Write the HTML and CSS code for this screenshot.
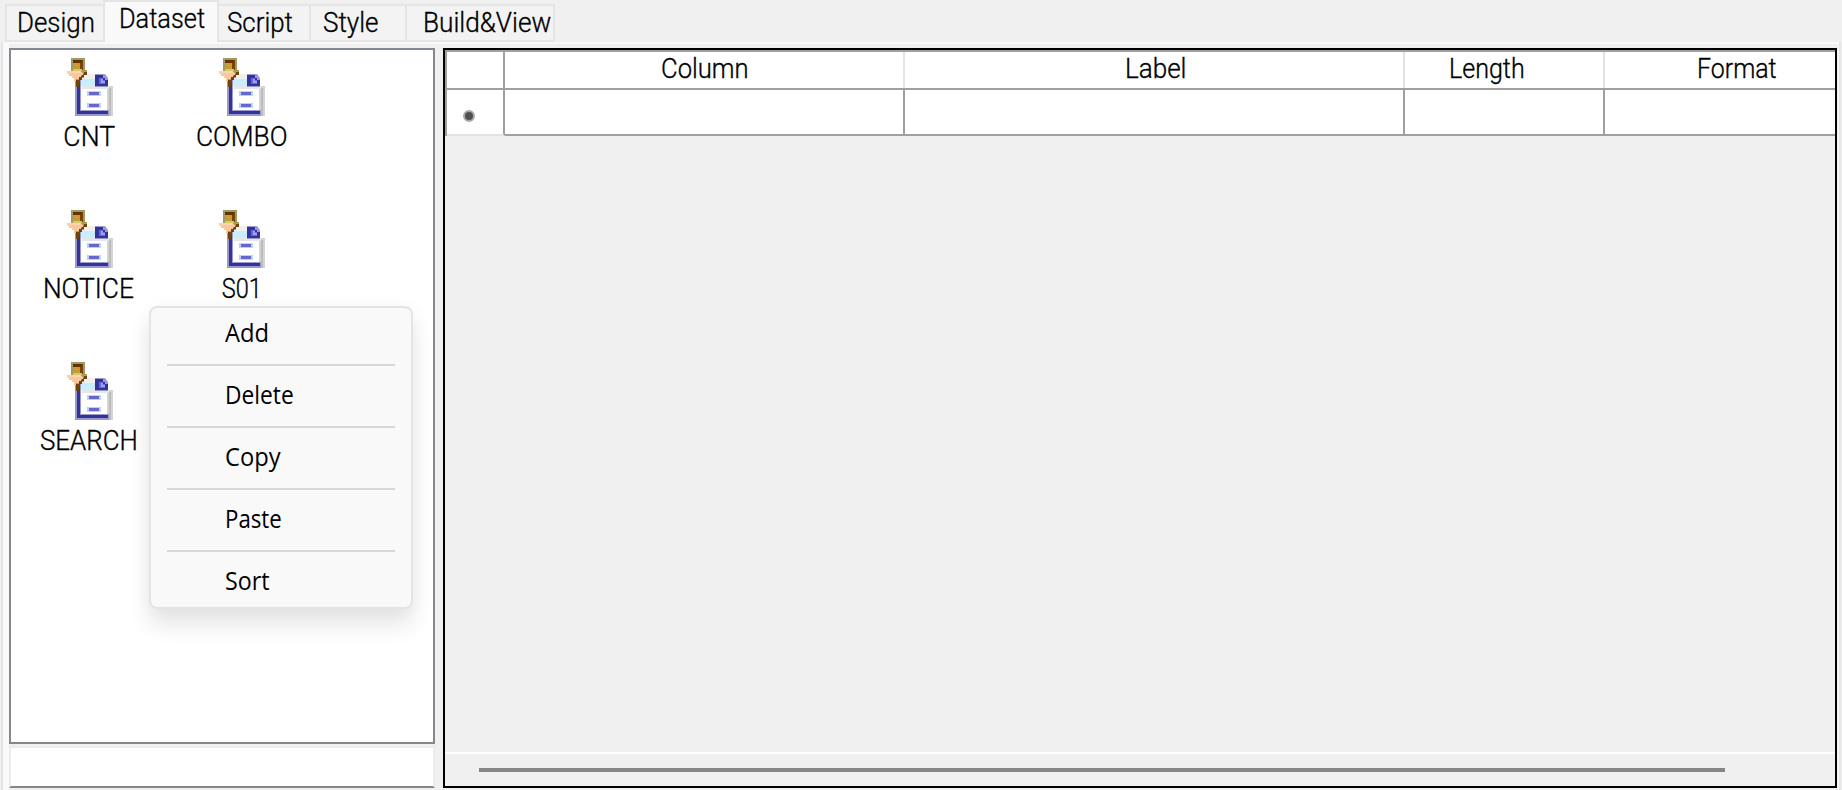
FILE: index.html
```html
<!DOCTYPE html>
<html lang="en">
<head>
<meta charset="utf-8">
<title>Dataset</title>
<link rel="stylesheet" href="styles.css">
</head>
<body>
<svg width="0" height="0" class="defs">
  <symbol id="dataset-icon" viewBox="0 0 46 58">
    <path fill="#d4d4d4" d="M38 28h8v30h-6z"/>
    <path fill="#bcbcbc" d="M42 30h2v28h-2z"/>
    <path fill="#9999cc" d="M8 22h6v30h28v6H8z"/>
    <path fill="#33339a" d="M10 21h3v32h28v3H10z"/>
    <path fill="#fff" d="M15 17h13v11h12v24H15z"/>
    <path fill="#f0f0f0" d="M16 16h12v5H15z"/>
    <path fill="#c9edff" d="M14 21h14v7H14z"/>
    <path fill="#e6e6e6" d="M15 28h27v3H15z"/>
    <path fill="#9999cc" d="M28 16h10l3 4v9H28z"/>
    <path fill="#33339a" d="M28 17h8v3h2v2h3v6H28z"/>
    <path fill="#6666d8" d="M32 20h4v2h2v4h-6z"/>
    <path fill="#9f9fff" d="M34 21h2v2h2v2h-4z"/>
    <path fill="#b4d6fb" d="M20 33h14v5H20zM20 45h14v5H20z"/>
    <path fill="#6666cc" d="M22 34h10v3H22zM22 46h10v3H22z"/>
    <path fill="#9b9b66" d="M4 0h14v14H4z"/>
    <path fill="#7c4200" d="M6 2h10v10H6z"/>
    <path fill="#663300" d="M6 2h9v3H6z"/>
    <path fill="#cc9933" d="M6 5h7v8H6z"/>
    <path fill="#cccc66" d="M6 11h9v2H6z"/>
    <path fill="#b59a55" d="M16 12h4v4h-3v4h-4v3H8v-4h4z"/>
    <path fill="#6b4410" d="M17 14h3v3h-3v2h-2v3h-2v3h-1v4h-3v-7h3v-4h3v-2h2z"/>
    <path fill="#ffd3b0" d="M0 13h14v3H0z"/>
    <path fill="#ffc799" d="M2 15h14v2h-2v2h-2v2H9v2H7v-3H5v-2H2z"/>
  </symbol>
</svg>
<div class="window">
  <nav class="tabs">
    <div class="tab design"><span>Design</span></div>
    <div class="tab dataset active"><span>Dataset</span></div>
    <div class="tab script"><span>Script</span></div>
    <div class="tab style"><span>Style</span></div>
    <div class="tab build"><span>Build&amp;View</span></div>
  </nav>
  <main class="page">
    <section class="side">
      <div class="list">
        <div class="item"><svg><use href="#dataset-icon"/></svg><span class="cnt">CNT</span></div>
        <div class="item"><svg><use href="#dataset-icon"/></svg><span class="combo">COMBO</span></div>
        <div class="item"><svg><use href="#dataset-icon"/></svg><span class="notice">NOTICE</span></div>
        <div class="item"><svg><use href="#dataset-icon"/></svg><span class="s01">S01</span></div>
        <div class="item"><svg><use href="#dataset-icon"/></svg><span class="search">SEARCH</span></div>
      </div>
      <div class="field"></div>
    </section>
    <section class="grid">
      <div class="row head">
        <div></div><div><span class="h-column">Column</span></div><div><span class="h-label">Label</span></div><div><span class="h-length">Length</span></div><div><span class="h-format">Format</span></div>
      </div>
      <div class="row entry">
        <div><i class="dot"></i></div><div></div><div></div><div></div><div></div>
      </div>
      <div class="scroll"><div class="thumb"></div></div>
    </section>
  </main>
  <div class="menu">
    <div><span class="m-add">Add</span></div>
    <div><span class="m-delete">Delete</span></div>
    <div><span class="m-copy">Copy</span></div>
    <div><span class="m-paste">Paste</span></div>
    <div><span class="m-sort">Sort</span></div>
  </div>
</div>
</body>
</html>
```
FILE: styles.css
```css
* { box-sizing: border-box; }
body { margin: 0; background: #f0f0f0; color: #000; font: 300 28px/32px Roboto, sans-serif; -webkit-text-stroke: .35px #000; overflow: hidden; }
.defs { position: absolute; }
.window { position: relative; width: 1842px; height: 790px; display: flex; flex-direction: column; }
span { display: inline-block; white-space: nowrap; transform-origin: 0 50%; }

.tabs { display: flex; align-items: flex-end; height: 42px; padding-left: 5px; flex: none; }
.tab { height: 38px; border: 2px solid #e5e5e5; border-left: 0; background: #f3f3f3; padding-top: 1px; }
.design { width: 98px; border-left: 2px solid #e5e5e5; padding-left: 10px; border-right: 0; }
.dataset { width: 116px; padding-left: 14px; }
.tab.active { height: 42px; background: #f9f9f9; border-left: 2px solid #e5e5e5; border-bottom: 0; }
.script { width: 92px; padding-left: 8px; }
.style { width: 96px; padding-left: 12px; }
.build { width: 148px; padding-left: 16px; }
.design span { transform: scaleX(.925); }
.dataset span { transform: scaleX(.905); }
.script span { transform: scaleX(.925); }
.style span { transform: scaleX(.93); }
.build span { transform: scaleX(.935); }

.page { flex: 1; margin: 0 1px 0 1px; border: 2px solid #e5e5e5; border-width: 0 2px; background: #f0f0f0; display: flex; gap: 8px; padding: 6px 2px 2px 6px; box-shadow: inset 6px 2px #f9f9f9, inset -1px 0 #f9f9f9; }
.side { width: 426px; display: flex; flex-direction: column; gap: 2px; }
.list { height: 696px; border: 2px solid #828790; background: #fff; display: grid; grid-template-columns: 152px 152px; grid-auto-rows: 152px; align-content: start; padding: 8px 0 0 3px; }
.item { display: flex; flex-direction: column; align-items: center; gap: 5px; }
.item svg { width: 46px; height: 58px; flex: none; }
.item span { transform-origin: 50% 50%; }
.cnt { transform: translateX(-1px) scaleX(.95); }
.combo { transform: scaleX(.94); }
.notice { transform: translateX(-2px) scaleX(.94); }
.s01 { transform: scaleX(.84); }
.search { transform: translateX(-1px) scaleX(.925); }
.field { flex: 1; border: 2px solid #ececec; border-bottom-color: #868686; background: #fff; }

.grid { flex: 1; border: 2px solid #000; display: flex; flex-direction: column; min-width: 0; overflow: hidden; }
.row { display: grid; grid-template-columns: 58px 400px 500px 200px 1fr; border-left: 2px solid #a0a0a0; background: #fff; flex: none; }
.head { height: 40px; border-top: 2px solid #a0a0a0; border-bottom: 2px solid #a0a0a0; }
.head div { border-right: 2px solid #e3e3e3; padding-top: 1px; }
.head div:first-child { border-color: #a0a0a0; }
.head div:last-child, .entry div:last-child { border-right: 0; }
.entry { height: 46px; }
.entry div { border-right: 2px solid #a0a0a0; border-bottom: 2px solid #a0a0a0; }
.entry div:first-child { border-bottom-color: #e3e3e3; }
.dot { display: block; width: 12px; height: 12px; border-radius: 50%; background: #505050; border: 2px solid #a8a8a8; margin: 20px 0 0 16px; }
.h-column { margin-left: 156px; transform: scaleX(.915); }
.h-label { margin-left: 220px; transform: scaleX(.93); }
.h-length { margin-left: 44px; transform: scaleX(.895); }
.h-format { margin-left: 92px; transform: scaleX(.89); }
.scroll { margin-top: auto; height: 34px; border-top: 2px solid #fff; padding: 14px 0 0 34px; flex: none; }
.thumb { width: 1246px; height: 4px; background: #868686; }

.menu { position: absolute; left: 149px; top: 306px; width: 264px; height: 303px; padding: 0 16px; border: 2px solid #e4e4e4; border-radius: 8px; background: #f9f9f9; box-shadow: 0 16px 22px rgba(0,0,0,.1), 0 0 20px rgba(0,0,0,.03); font: 400 25px/34px "Open Sans", sans-serif; -webkit-text-stroke: 0; }
.menu div { height: 62px; padding: 11px 0 0 58px; border-bottom: 2px solid #d7d7d7; }
.menu div:first-child { height: 58px; padding-top: 7px; }
.menu div:last-child { border-bottom: 0; }
.m-add { transform: scaleX(.95); }
.m-delete { transform: scaleX(.91); }
.m-copy { transform: scaleX(.95); }
.m-paste { transform: scaleX(.89); }
.m-sort { transform: scaleX(.93); }
```
